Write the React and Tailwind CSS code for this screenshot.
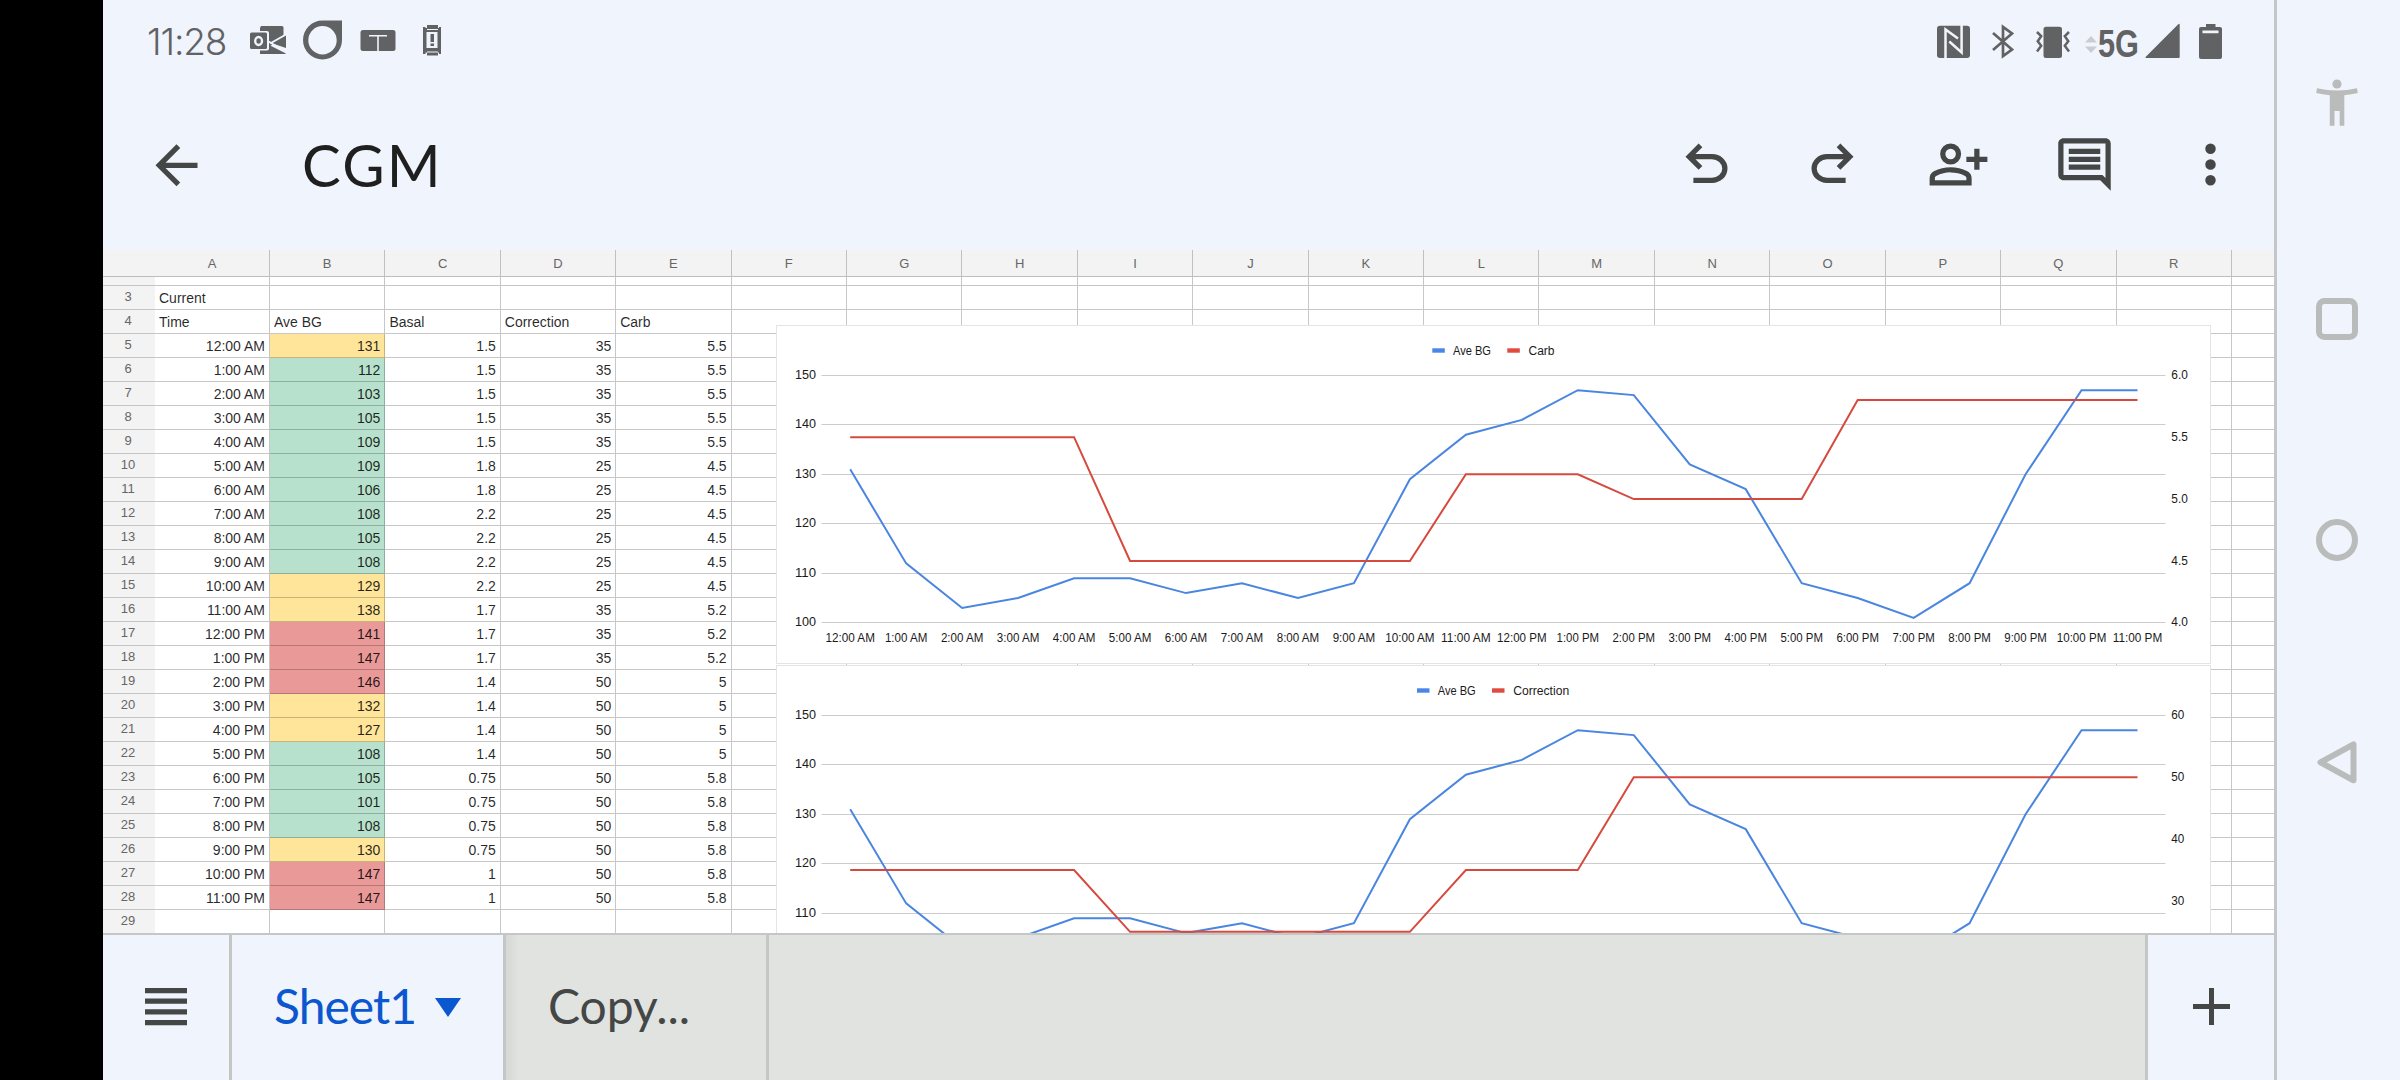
import React from 'react';

const COLUMNS = ['A', 'B', 'C', 'D', 'E', 'F', 'G', 'H', 'I', 'J', 'K', 'L', 'M', 'N', 'O', 'P', 'Q', 'R'];

// time, average BG, basal, correction, carb
const READINGS = [
  ['12:00 AM', 131, 1.5, 35, 5.5],
  ['1:00 AM', 112, 1.5, 35, 5.5],
  ['2:00 AM', 103, 1.5, 35, 5.5],
  ['3:00 AM', 105, 1.5, 35, 5.5],
  ['4:00 AM', 109, 1.5, 35, 5.5],
  ['5:00 AM', 109, 1.8, 25, 4.5],
  ['6:00 AM', 106, 1.8, 25, 4.5],
  ['7:00 AM', 108, 2.2, 25, 4.5],
  ['8:00 AM', 105, 2.2, 25, 4.5],
  ['9:00 AM', 108, 2.2, 25, 4.5],
  ['10:00 AM', 129, 2.2, 25, 4.5],
  ['11:00 AM', 138, 1.7, 35, 5.2],
  ['12:00 PM', 141, 1.7, 35, 5.2],
  ['1:00 PM', 147, 1.7, 35, 5.2],
  ['2:00 PM', 146, 1.4, 50, 5],
  ['3:00 PM', 132, 1.4, 50, 5],
  ['4:00 PM', 127, 1.4, 50, 5],
  ['5:00 PM', 108, 1.4, 50, 5],
  ['6:00 PM', 105, 0.75, 50, 5.8],
  ['7:00 PM', 101, 0.75, 50, 5.8],
  ['8:00 PM', 108, 0.75, 50, 5.8],
  ['9:00 PM', 130, 0.75, 50, 5.8],
  ['10:00 PM', 147, 1, 50, 5.8],
  ['11:00 PM', 147, 1, 50, 5.8],
];

const ROWS = [
  { number: 3, cells: ['Current'] },
  { number: 4, cells: ['Time', 'Ave BG', 'Basal', 'Correction', 'Carb'] },
  ...READINGS.map((cells, i) => ({ number: i + 5, cells })),
  { number: 29, cells: [] },
];

const bgColor = (value) => {
  if (value > 140) return 'bg-[#ea9999]';
  if (value > 120) return 'bg-[#ffe599]';
  return 'bg-[#b7e1cd]';
};

const GRID = 'grid grid-cols-[52px_115px_repeat(17,115.41px)_1fr]';

const SheetRow = ({ number, cells }) => (
  <div className={`${GRID} h-[24px] text-[14px] leading-[25px] text-black/85`}>
    <div className="bg-[#f3f3f3] border-b border-[#c6c6c6] text-center text-[13px] leading-[22px] text-[#666] pr-0.5">{number}</div>
    {[...COLUMNS, ''].map((col, i) => {
      const value = cells[i];
      const isReading = number > 4 && value !== undefined;
      return (
        <div
          key={i}
          className={`h-[24px] border-b border-black/22 whitespace-nowrap ${i < 18 ? 'border-r' : ''} ${isReading ? 'text-right pr-[4px]' : 'pl-[4px]'} ${isReading && i === 1 ? bgColor(value) : ''}`}
        >
          {value !== undefined && <span className={`inline-block scale-y-107 ${isReading ? 'origin-right' : 'origin-left'}`}>{value}</span>}
        </div>
      );
    })}
  </div>
);

const Label = ({ x, y, width, anchor = 'start', children }) => (
  <text x={x} y={y} textAnchor={anchor} textLength={width} lengthAdjust="spacingAndGlyphs" className="text-[12.5px] fill-[#1a1a1a]">
    {children}
  </text>
);

// Line chart with Ave BG on the left axis and a second series on the right one
const Chart = ({ series, column, min, max, ticks, legendX, seriesWidth }) => {
  const top = 50.3;
  const bottom = 297.8;
  const x = (i) => 74.2 + i * 55.97;
  const yBg = (v) => bottom - ((v - 100) / 50) * (bottom - top);
  const ySeries = (v) => bottom - ((v - min) / (max - min)) * (bottom - top);
  return (
    <svg width="1435" height="340" viewBox="0 0 1435 340" className="block">
      <rect x="0.5" y="0.5" width="1434" height="338" fill="#fff" stroke="#e4e4e4" />
      <rect x={legendX} y="23.3" width="12.5" height="4.4" fill="#4a86e8" />
      <Label x={legendX + 20.7} y={30} width={38}>Ave BG</Label>
      <rect x={legendX + 75} y="23.3" width="12.5" height="4.4" fill="#e04a3f" />
      <Label x={legendX + 96.2} y={30} width={seriesWidth}>{series}</Label>
      {[150, 140, 130, 120, 110, 100].map((v) => (
        <g key={v}>
          <line x1="45.5" x2="1389.5" y1={Math.floor(yBg(v)) + 0.5} y2={Math.floor(yBg(v)) + 0.5} stroke="#cccccc" />
          <Label x={40} y={yBg(v) + 3.6} width={21} anchor="end">{v}</Label>
        </g>
      ))}
      {ticks.map((t) => (
        <Label key={t} x={1395.3} y={ySeries(Number(t)) + 3.6} width={t.length === 3 ? 16.5 : 13}>{t}</Label>
      ))}
      <polyline points={READINGS.map((r, i) => `${x(i)},${yBg(r[1])}`).join(' ')} fill="none" stroke="#4a86e0" strokeWidth="2" />
      <polyline points={READINGS.map((r, i) => `${x(i)},${ySeries(r[column])}`).join(' ')} fill="none" stroke="#d64a3e" strokeWidth="2" />
      {/* the second chart runs past the bottom of the sheet */}
      {column === 4 && READINGS.map((r, i) => (
        <Label key={r[0]} x={x(i)} y={317} width={r[0].length === 8 ? 49.5 : 42.5} anchor="middle">{r[0]}</Label>
      ))}
    </svg>
  );
};

const StatusBar = () => (
  <div className="flex h-[79px] shrink-0 pt-[20px] text-[#616263] fill-[#616263]">
    <span className="ml-[44px] w-[82px] font-['Inter'] font-light text-[37px] leading-[43px] tracking-[-1.1px] whitespace-nowrap">11:28</span>
    {/* Outlook */}
    <svg className="ml-[21px]" width="37" height="40" viewBox="0 20 37 40">
      <path d="M11 26h21q1.500 0 1.500 1.500V41L23 44 10 54V28z" />
      <path d="M10 54V45h9l17 8.500-1 .500z" />
      <path d="M21 43l15-8v13z" />
      <path d="M18.500 41.500 36.500 52M20 43.500l16-9" stroke="#f0f4fc" strokeWidth="2" />
      <rect x="-1" y="31" width="20" height="19.500" rx="2" fill="#f0f4fc" />
      <rect x="0" y="32.500" width="17" height="16.500" rx="1.500" />
      <ellipse cx="8.600" cy="41" rx="3.400" ry="4" fill="none" stroke="#f0f4fc" strokeWidth="2.400" />
    </svg>
    {/* Ring with a square corner */}
    <svg className="ml-[16px]" width="39" height="40" viewBox="0 20.500 39 40">
      <path fillRule="evenodd" d="M19.500 21H39v19.500A19.500 19.500 0 1 1 19.500 21zm0 5.500a14.200 14.200 0 1 0 0 28.400 14.200 14.200 0 0 0 0-28.400z" />
    </svg>
    <svg className="ml-[18px]" width="36" height="40" viewBox="0 20 36 40">
      <rect x="0.500" y="30" width="35" height="21" rx="2.500" />
      <path d="M9 35.800h18M18 35.800V51" stroke="#f0f4fc" strokeWidth="1.600" />
    </svg>
    <svg className="ml-[27px]" width="18" height="40" viewBox="0 20 18 40">
      <path fillRule="evenodd" d="M0 27h2.500v1H4v-3h11v3h1V27h2v27h-2v-1.500h-1v3H4v-3H2.500V54H0zM3.500 32v16h11V32z" />
      <path d="M4 29.500h11M4 52h11" stroke="#f0f4fc" strokeWidth="1" />
      <path d="M7.500 34h3.500v8H7.500zM7.500 43.500h3.500v2.500H7.500z" />
    </svg>
    <div className="flex-1" />
    {/* NFC */}
    <svg width="33" height="40" viewBox="0 20 33 40">
      <rect x="0" y="25.700" width="33" height="32.300" rx="3" />
      <path d="M8.500 58.500V29.500L21 38.500" fill="none" stroke="#f0f4fc" strokeWidth="2.500" />
      <path d="M24.600 25V52.500L12.300 41.500" fill="none" stroke="#f0f4fc" strokeWidth="2.500" />
    </svg>
    <svg className="ml-[22px]" width="22" height="40" viewBox="0 20 22 40">
      <path d="M1 33 20 49.500 11 56V27l9 6.500L1 50" fill="none" stroke="#616263" strokeWidth="2.700" />
    </svg>
    <svg className="ml-[22px]" width="34" height="40" viewBox="0 20 34 40">
      <rect x="7.500" y="26.700" width="18.500" height="31.300" rx="2.500" />
      <path d="M1 32l4.200 4.200-3.500 5 3.500 4.500L1 51.500M33 32l-4.200 4.200 3.500 5-3.500 4.500L33 51.500" fill="none" stroke="#616263" strokeWidth="2.500" />
    </svg>
    <svg className="ml-[15px]" width="12" height="40" viewBox="0 20 12 40">
      <path d="M0 42.500 6 36l6 6.500zM0 46.500h12L6 53z" fill="#c9ccd1" />
    </svg>
    <svg className="ml-px overflow-visible" width="42" height="40" viewBox="0 20 42 40">
      <text x="0" y="57.300" textLength="41" lengthAdjust="spacingAndGlyphs" className="font-bold text-[38.5px] font-['Liberation_Sans']">5G</text>
    </svg>
    <svg className="ml-[5px]" width="35" height="40" viewBox="0 20 35 40">
      <path d="M33 24.500q1.700-1.700 1.700.5V57q0 1-1 1H1.500Q-.5 58 .8 56.700z" />
    </svg>
    <svg className="ml-[19px] mr-[52px]" width="23" height="40" viewBox="0 20 23 40">
      <path fillRule="evenodd" d="M7 24h9.500v3H21q2 0 2 2v28q0 2-2 2H2q-2 0-2-2V29q0-2 2-2h5zM3.500 30.500v2.800h16v-2.800z" />
    </svg>
  </div>
);

const ToolbarButton = ({ d }) => (
  <button className="w-[126px] flex items-center justify-center">
    <svg width="63" height="63" viewBox="0 0 24 24" fill="#444746">
      <path d={d} />
    </svg>
  </button>
);

const AppBar = () => (
  <div className="flex h-[171px] shrink-0 items-center pr-px">
    <svg className="ml-[42px]" width="63" height="63" viewBox="0 -0.3 24 24" fill="#444746">
      <path d="M20 11H7.830l5.590-5.590L12 4l-8 8 8 8 1.410-1.410L7.830 13H20v-2z" />
    </svg>
    <h1 className="ml-[94px] flex-1 font-['Lato'] text-[58px] leading-none tracking-[2.2px] text-[#1f1f1f]">CGM</h1>
    <ToolbarButton d="M7 19v-2h7.100q1.575 0 2.738-1T18 13.500T16.838 11T14.100 10H7.800l2.600 2.600L9 14L4 9l5-5l1.400 1.400L7.800 8h6.300q2.425 0 4.163 1.575T20 13.500t-1.737 3.925T14.100 19z" />
    <ToolbarButton d="M17 19v-2H9.900q-1.575 0-2.738-1T6 13.500T7.162 11T9.900 10h6.300l-2.600 2.600L15 14l5-5l-5-5l-1.400 1.400L16.200 8H9.900Q7.475 8 5.737 9.575T4 13.500t1.737 3.925T9.900 19z" />
    <ToolbarButton d="M18 14v-3h-3V9h3V6h2v3h3v2h-3v3zM9 12a4 4 0 1 1 0-8a4 4 0 0 1 0 8zM1 20v-2.800q0-.85.438-1.562T2.600 14.550q1.550-.775 3.150-1.162T9 13t3.250.388t3.150 1.162q.725.375 1.163 1.088T17 17.200V20zm2-2h12v-.8q0-.275-.137-.5t-.363-.35q-1.350-.675-2.725-1.012T9 15t-2.775.338T3.500 16.350q-.225.125-.363.35T3 17.200zm6-8a2 2 0 1 0 0-4a2 2 0 0 0 0 4z" />
    <ToolbarButton d="M21.990 4c0-1.100-.89-2-1.990-2H4c-1.100 0-2 .9-2 2v12c0 1.100.9 2 2 2h14l4 4-.01-18zM20 4v13.170L18.830 16H4V4h16zM6 12h12v2H6zm0-3h12v2H6zm0-3h12v2H6z" />
    <ToolbarButton d="M12 8a2 2 0 1 0 0-4a2 2 0 0 0 0 4zm0 6a2 2 0 1 0 0-4a2 2 0 0 0 0 4zm0 6a2 2 0 1 0 0-4a2 2 0 0 0 0 4z" />
  </div>
);

const Sheet = () => (
  <div className="relative h-[685px] shrink-0 overflow-hidden bg-white border-b-2 border-[#c4c7c5]">
    <div className={`${GRID} h-[27px] bg-[#f3f3f3] border-b border-[#bdbdbd] text-center text-[13px] leading-[27px] text-[#666]`}>
      <div />
      {COLUMNS.map((col) => (
        <div key={col} className="border-r border-[#c0c0c0]">{col}</div>
      ))}
    </div>
    {/* bottom edge of the row scrolled out of view */}
    <div className={`${GRID} h-[9px] border-b border-[#c6c6c6]`}>
      <div className="bg-[#f3f3f3]" />
      {COLUMNS.map((col) => (
        <div key={col} className="border-r border-[#c6c6c6]" />
      ))}
    </div>
    {ROWS.map((row) => (
      <SheetRow key={row.number} {...row} />
    ))}
    <div className="absolute left-[673px] top-[75px]">
      <Chart series="Carb" column={4} min={4} max={6} ticks={['6.0', '5.5', '5.0', '4.5', '4.0']} legendX={656.3} seriesWidth={26} />
      <Chart series="Correction" column={3} min={20} max={60} ticks={['60', '50', '40', '30']} legendX={641} seriesWidth={56} />
    </div>
  </div>
);

const TabBar = () => (
  <div className="flex h-[145px] shrink-0 bg-[#e1e3e0] font-['Lato'] text-[48px]">
    <button className="w-[129px] flex items-center justify-center bg-[#f0f4fc] border-r-3 border-[#c4c7c5]">
      <svg className="ml-[-1px] mt-[-2px]" width="42" height="38" viewBox="0 0 42 38" fill="#444746">
        <path d="M0 0h42v5.200H0zM0 10.600h42v5.200H0zM0 21.300h42v5.200H0zM0 32h42v5.200H0z" />
      </svg>
    </button>
    <button className="w-[274px] flex items-center bg-[#f0f4fc] border-r-3 border-[#c4c7c5] pl-[42px] pb-[3px] text-[#0b57d0]">
      <span className="w-[139px] text-left tracking-[-1px]">Sheet1</span>
      <svg className="ml-[22px] mt-[2px]" width="26" height="19" viewBox="0 0 26 19">
        <path d="M0 0h26L13 19z" fill="#0b57d0" />
      </svg>
    </button>
    <button className="w-[263px] flex items-center border-r-3 border-[#c4c7c5] bg-linear-to-r from-[#d6d8d6] to-[#e1e3e0] to-5% pl-[42px] pb-[3px] text-[#444746]">Copy...</button>
    <div className="flex-1" />
    <button className="w-[129px] flex items-center justify-center bg-[#f0f4fc] border-l-3 border-[#c4c7c5]">
      <svg className="mt-[-2px]" width="37" height="37" viewBox="0 0 37 37" fill="#444746">
        <path d="M16 0h5v16h16v5H21v16h-5V21H0v-5h16z" />
      </svg>
    </button>
  </div>
);

const NavBar = () => (
  <div className="flex flex-1 flex-col items-center bg-[#f0f4fc] pr-[3px]">
    <svg className="mt-[79px]" width="42" height="47" viewBox="0 0 42 47" fill="#babbbb">
      <circle cx="21" cy="5" r="4.600" />
      <path d="M1 9.300q20 4.400 40 0l.8 4.800q-6.500 1.500-13.500 2.200v30.500h-4.600V32h-5.200v14.800h-4.700V16.300Q6.500 15.600.2 14.100z" />
    </svg>
    <svg className="mt-[172px]" width="42" height="42" viewBox="0 0 42 42" fill="none" stroke="#babbbb" strokeWidth="6">
      <rect x="3" y="3" width="36" height="36" rx="5.500" />
    </svg>
    <svg className="mt-[179px]" width="42" height="42" viewBox="0 0 42 42" fill="none" stroke="#babbbb" strokeWidth="6">
      <circle cx="21" cy="21" r="18" />
    </svg>
    <svg className="mt-[180px]" width="40" height="43" viewBox="0 0 40 43" fill="none" stroke="#babbbb" strokeWidth="6" strokeLinejoin="round">
      <path d="M36.500 3.300v36L3.500 21.300z" />
    </svg>
  </div>
);

const App = () => {
  return (
    <div className="flex w-[2400px] h-[1080px] overflow-hidden bg-black font-['Liberation_Sans',sans-serif]">
      <div className="ml-[103px] flex w-[2174px] shrink-0 flex-col bg-[#f0f4fc] border-r-3 border-[#c4c7c9]">
        <StatusBar />
        <AppBar />
        <Sheet />
        <TabBar />
      </div>
      <NavBar />
    </div>
  );
};

export default App;
